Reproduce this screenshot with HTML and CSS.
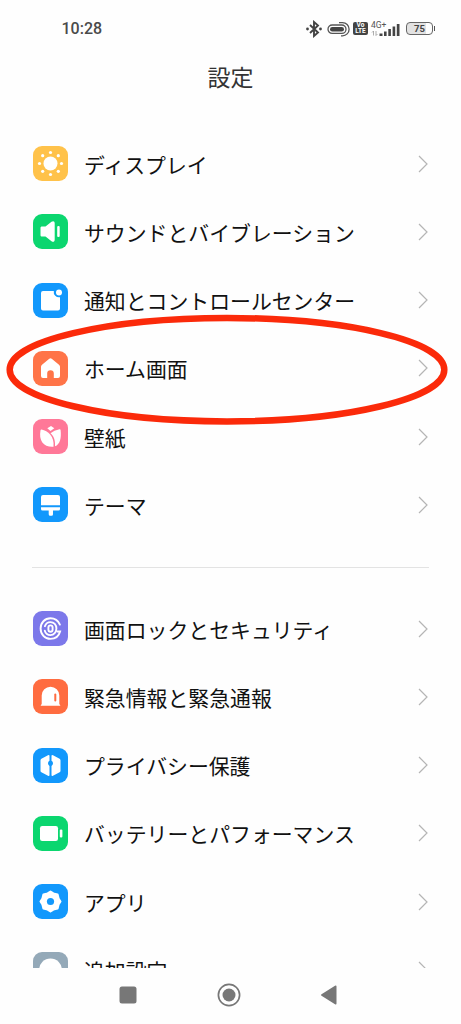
FILE: index.html
```html
<!DOCTYPE html>
<html lang="ja">
<head>
<meta charset="utf-8">
<title>設定</title>
<link rel="stylesheet" href="styles.css">
</head>
<body>
<div class="phone">
  <header class="status">
    <span class="clock">10:28</span>
    <div class="indicators">
      <svg class="bt" width="16" height="18" viewBox="0 0 16 18"><path d="M4 5l8 7.500-4 3.500V2l4 3.500L4 13" /><circle cx="1.500" cy="9" r="1.400"/><circle cx="14.500" cy="9" r="1.400"/></svg>
      <svg class="loop" width="24" height="18" viewBox="0 0 24 18"><rect x="1" y="5" width="18" height="8.400" rx="4.200"/><rect class="solid" x="3" y="6.900" width="14" height="4.600" rx="2.300"/><path d="M12 2.600h3.500a6.500 6.500 0 0 1 0 13.200H14"/></svg>
      <div class="volte"><span>Vo</span><span>LTE</span></div>
      <div class="signal">
        <span class="gen">4G+</span>
        <svg width="30" height="18" viewBox="0 0 30 18"><path class="arrows" d="M2.500 15.500v-4.500L1 12.500M5 11v4.500l1.500-1.500"/><path d="M8.500 13.500h3V16h-3zM13 11.500h2.600V16H13zM17.300 9h2.600v7h-2.600zM21.600 6.500h2.600V16h-2.600zM25.800 4h2.700v12h-2.700z"/></svg>
      </div>
      <div class="battery"><span>75</span></div>
    </div>
  </header>
  <h1 class="title">設定</h1>
  <main class="settings">
    <ul class="group">
      <li class="row"><svg class="icon yellow" viewBox="0 0 35 35"><circle cx="17.500" cy="17.500" r="7"/><circle cx="17.500" cy="6.500" r="1.600"/><circle cx="25.300" cy="9.700" r="1.600"/><circle cx="28.500" cy="17.500" r="1.600"/><circle cx="25.300" cy="25.300" r="1.600"/><circle cx="17.500" cy="28.500" r="1.600"/><circle cx="9.700" cy="25.300" r="1.600"/><circle cx="6.500" cy="17.500" r="1.600"/><circle cx="9.700" cy="9.700" r="1.600"/></svg><span class="label">ディスプレイ</span><svg class="chevron" viewBox="0 0 10 18"><path d="M1 1l8 8-8 8"/></svg></li>
      <li class="row"><svg class="icon green" viewBox="0 0 35 35"><path d="M9 12.500h3.500l6-4.700c1.700-1.200 3.200-.6 3.200 1.400v16.600c0 2-1.500 2.600-3.200 1.400l-6-4.700H9c-1 0-1.500-.5-1.500-1.500v-7c0-1 .5-1.500 1.500-1.500z"/><rect x="24.200" y="12" width="2.500" height="11" rx="1.100"/></svg><span class="label">サウンドとバイブレーション</span><svg class="chevron" viewBox="0 0 10 18"><path d="M1 1l8 8-8 8"/></svg></li>
      <li class="row"><svg class="icon blue" viewBox="0 0 35 35"><path d="M10 8h10.800a5.300 5.300 0 0 0 6.200 6.200V25.500a2 2 0 0 1-2 2H10a2 2 0 0 1-2-2V10a2 2 0 0 1 2-2z"/><circle cx="26" cy="9.500" r="3"/></svg><span class="label">通知とコントロールセンター</span><svg class="chevron" viewBox="0 0 10 18"><path d="M1 1l8 8-8 8"/></svg></li>
      <li class="row"><svg class="icon coral" viewBox="0 0 35 35"><path d="M16.300 7.800q1.200-.9 2.400 0l7.300 6q1 .8 1 2V25q0 2-2 2h-4.200v-4.500a3.300 3.300 0 0 0-6.600 0V27H10q-2 0-2-2v-9.200q0-1.200 1-2z"/></svg><span class="label">ホーム画面</span><svg class="chevron" viewBox="0 0 10 18"><path d="M1 1l8 8-8 8"/></svg></li>
      <li class="row"><svg class="icon pink" viewBox="0 0 35 35"><path d="M8.500 10.500C15 12 21.500 17 20.500 27.800C11 28.500 5.500 22 7.500 11.200q.2-.8 1-.7z"/><path d="M26.500 10.200q1-.2 1.100.8C28.500 19 27 25.500 22 27.300C22.500 21 20.500 16.800 17.500 14.300Q21 11 26.500 10.200z"/><path d="M14.300 9.200L18 7l3.300 2.200L17.500 12z"/></svg><span class="label">壁紙</span><svg class="chevron" viewBox="0 0 10 18"><path d="M1 1l8 8-8 8"/></svg></li>
      <li class="row"><svg class="icon blue" viewBox="0 0 35 35"><path d="M10 8h15q2 0 2 2v8.300H8V10q0-2 2-2zM8 20.200h19v1.800q0 1.500-1.500 1.500H20v3.700q0 1.500-1.500 1.500h-1.300q-1.500 0-1.500-1.500v-3.700H9.500Q8 23.500 8 22z"/></svg><span class="label">テーマ</span><svg class="chevron" viewBox="0 0 10 18"><path d="M1 1l8 8-8 8"/></svg></li>
    </ul>
    <hr class="divider">
    <ul class="group">
      <li class="row"><svg class="icon violet" viewBox="0 0 35 35"><g class="line"><path d="M26.900 13.600C25.200 9.800 21.800 7.300 17.500 7.300c-5.700 0-9.900 4.500-9.900 10.200s4.200 10.400 9.900 10.400c4.700 0 8.400-3 9.600-7.400h-3"/><path d="M11.900 15.200c.8-2.500 3-4.100 5.600-4.100 3.400 0 5.900 2.800 5.900 6.400s-2.500 6.600-5.900 6.600c-2.700 0-4.900-1.700-5.700-4.400"/><rect x="15.400" y="14.400" width="4.200" height="6.400" rx="2.100"/></g></svg><span class="label">画面ロックとセキュリティ</span><svg class="chevron" viewBox="0 0 10 18"><path d="M1 1l8 8-8 8"/></svg></li>
      <li class="row"><svg class="icon orange" viewBox="0 0 35 35"><path d="M8.700 25.200V16.500a8.800 8.800 0 0 1 17.600 0v8.700q1 .2 1 1.600H7.700q0-1.400 1-1.600z"/><rect class="cut" x="21.300" y="14.500" width="2" height="8" rx="1"/></svg><span class="label">緊急情報と緊急通報</span><svg class="chevron" viewBox="0 0 10 18"><path d="M1 1l8 8-8 8"/></svg></li>
      <li class="row"><svg class="icon blue" viewBox="0 0 35 35"><path d="M15 7.300q1.500-.7 1.500.8v4.600a3 3 0 0 0 0 5.200V27q0 1.500-1.500.8L8.400 24.300q-.9-.5-.9-1.500V12.300q0-1 .9-1.500zM20 7.300q-1.500-.7-1.500.8v4.600a3 3 0 0 1 0 5.200V27q0 1.500 1.500.8l6.600-3.500q.9-.5.9-1.500V12.300q0-1-.9-1.500z"/></svg><span class="label">プライバシー保護</span><svg class="chevron" viewBox="0 0 10 18"><path d="M1 1l8 8-8 8"/></svg></li>
      <li class="row"><svg class="icon green" viewBox="0 0 35 35"><rect x="7" y="10" width="18" height="15" rx="2.200"/><rect x="26.800" y="13.500" width="2.600" height="8" rx="1.100"/></svg><span class="label">バッテリーとパフォーマンス</span><svg class="chevron" viewBox="0 0 10 18"><path d="M1 1l8 8-8 8"/></svg></li>
      <li class="row"><svg class="icon blue" viewBox="0 0 35 35"><path class="gear" d="M17.500 7.500l2.900 1.900 4.200 1 1 4.200 1.900 2.900-1.900 2.900-1 4.200-4.200 1-2.900 1.900-2.900-1.900-4.200-1-1-4.200-1.900-2.900 1.900-2.900 1-4.200 4.200-1z"/><circle class="cut" cx="17.500" cy="17.500" r="3.600"/></svg><span class="label">アプリ</span><svg class="chevron" viewBox="0 0 10 18"><path d="M1 1l8 8-8 8"/></svg></li>
      <li class="row"><svg class="icon slate" viewBox="0 0 35 35"><circle cx="17.500" cy="17.700" r="11.300"/></svg><span class="label">追加設定</span><svg class="chevron" viewBox="0 0 10 18"><path d="M1 1l8 8-8 8"/></svg></li>
    </ul>
  </main>
  <nav class="navbar">
    <svg width="18" height="18" viewBox="0 0 18 18"><rect x=".5" y=".5" width="17" height="17" rx="2.500"/></svg>
    <svg width="24" height="24" viewBox="0 0 24 24"><circle class="ring" cx="12" cy="12" r="10.600"/><circle cx="12" cy="12" r="6.500"/></svg>
    <svg width="18" height="20" viewBox="0 0 18 20"><path d="M1.500 9.300L15 .8q1.500-.8 1.500.8v16.800q0 1.600-1.500.8L1.500 10.700q-1.200-.7 0-1.400z"/></svg>
  </nav>
  <svg class="highlight" width="461" height="120" viewBox="0 0 461 120"><ellipse cx="227" cy="59.700" rx="217.300" ry="51.700"/></svg>
</div>
</body>
</html>
```
FILE: styles.css
```css
* { box-sizing: border-box; }
body { margin: 0; background: #fefefe; }
.phone {
  position: relative;
  display: flex;
  flex-direction: column;
  width: 461px;
  height: 1024px;
  overflow: hidden;
  background: #fefefe;
  color: #111;
  font-family: "Noto Sans CJK JP", sans-serif;
}
.status {
  display: flex;
  align-items: center;
  justify-content: space-between;
  height: 57px;
  padding: 0 25px 0 61.5px;
}
.clock { padding-top: 1px; font: 500 16px/20px Roboto, sans-serif; color: #4a4a4a; }
.indicators { display: flex; align-items: center; color: #444; }
.bt { fill: #444; margin-right: 5px; }
.bt path { fill: none; stroke: #444; stroke-width: 1.9; }
.loop { fill: none; stroke: #555; stroke-width: 1.3; margin-right: 2px; }
.loop .solid { fill: #444; stroke: none; }
.volte {
  display: flex;
  flex-direction: column;
  align-items: center;
  justify-content: center;
  width: 15px;
  height: 13px;
  margin-right: 3px;
  border-radius: 2px;
  background: #444;
  color: #fff;
  font: 700 6.5px/5.5px Roboto, sans-serif;
}
.signal { display: grid; width: 30px; height: 18px; margin-right: 5px; }
.signal > * { grid-area: 1 / 1; }
.signal svg { fill: #444; }
.signal .arrows { fill: none; stroke: #999; stroke-width: .8; }
.gen { font: 400 8.5px/10px Roboto, sans-serif; color: #555; }
.battery {
  position: relative;
  width: 27px;
  height: 13px;
  margin-right: 3px;
  border: 1.4px solid #666;
  border-radius: 4px;
  background: linear-gradient(90deg, #e2e2e2 75%, #fefefe 75%);
  font: 700 9.5px/11px Roboto, sans-serif;
  text-align: center;
}
.battery::after {
  content: "";
  position: absolute;
  top: 3px;
  right: -3px;
  width: 1.5px;
  height: 5px;
  background: #555;
}
.title {
  height: 72.6px;
  margin: 0;
  font-size: 23px;
  font-weight: 400;
  line-height: 39px;
  text-align: center;
  color: #333;
}
.settings { height: 838.9px; overflow: hidden; }
.group { margin: 0; padding: 0; list-style: none; }
.row {
  display: flex;
  align-items: center;
  height: 68.25px;
  padding: 0 33.5px 0 33px;
}
.icon { flex: none; width: 35px; height: 35px; margin-right: 16px; border-radius: 9px; fill: #fff; }
.label { flex: 1; font-size: 20.87px; line-height: 30px; white-space: nowrap; }
.chevron { width: 10px; height: 18px; fill: none; stroke: #b5b5b5; stroke-width: 1.2; }
.yellow { background: #ffc24a; }
.green { background: #0bd66f; }
.blue { background: #1298fc; }
.coral { background: #ff7448; }
.orange { background: #ff6c40; }
.pink { background: #ff7898; }
.violet { background: #7c78ea; }
.slate { background: #94a9b8; }
.line { fill: none; stroke: #fff; stroke-width: 1.9; stroke-linecap: round; }
.gear { stroke: #fff; stroke-width: 2; stroke-linejoin: round; }
.orange .cut { fill: #ff6c40; }
.blue .cut { fill: #1298fc; }
.divider { height: 1px; margin: 27.5px 32px 27px; border: 0; background: #e3e3e3; }
.navbar {
  display: flex;
  flex: 1;
  align-items: center;
  justify-content: space-between;
  padding: 0 123px 3px 119px;
  fill: #777;
}
.navbar .ring { fill: none; stroke: #777; stroke-width: 1.7; }
.highlight { position: absolute; top: 310px; left: 0; fill: none; stroke: #fb2a0a; stroke-width: 6.5; }
```
